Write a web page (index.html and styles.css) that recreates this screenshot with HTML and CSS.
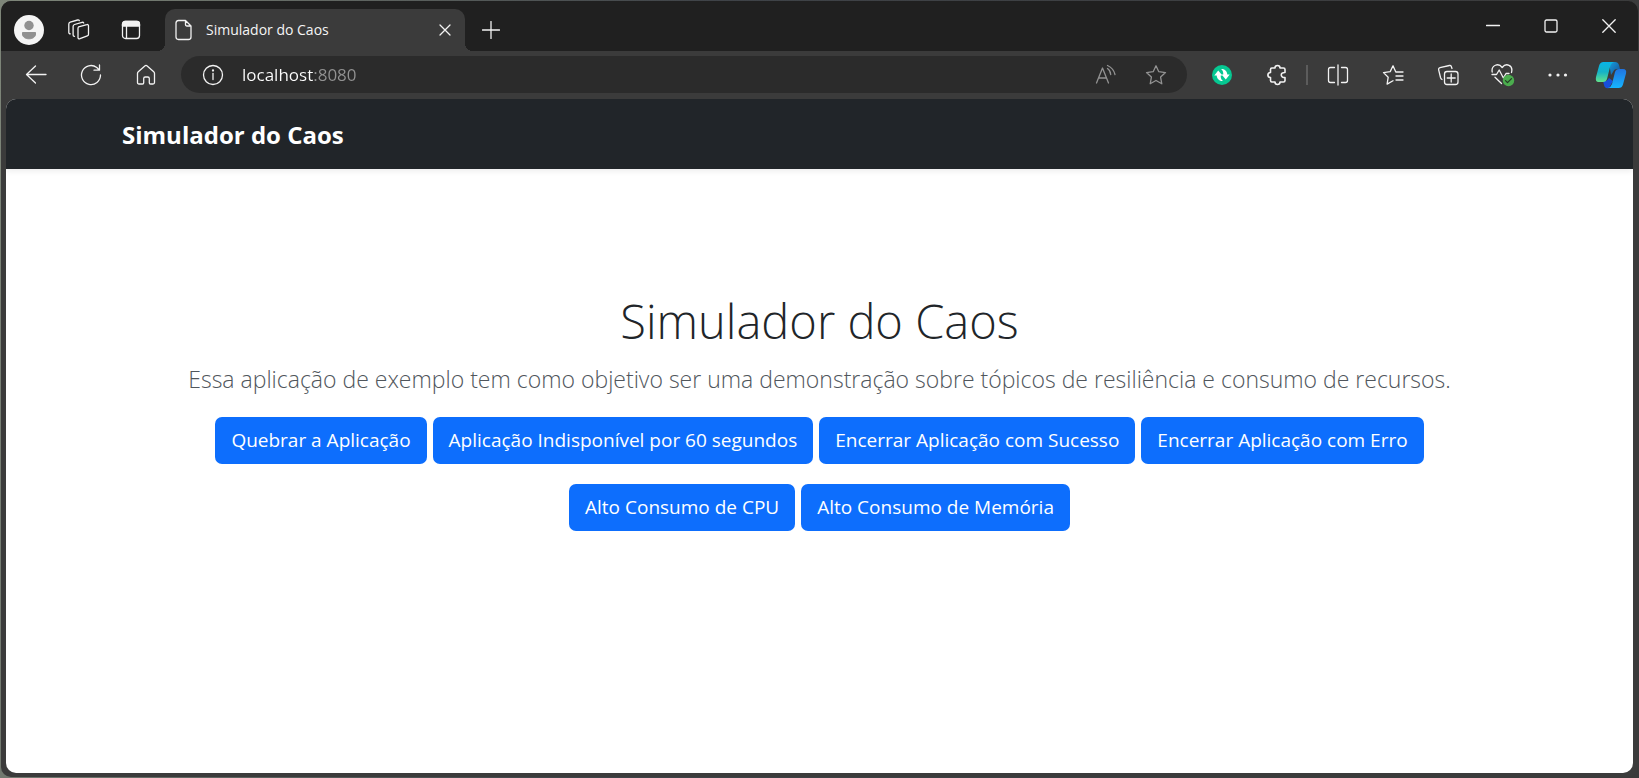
FILE: index.html
```html
<!DOCTYPE html>
<html lang="pt-BR">
<head>
  <meta charset="UTF-8">
  <title>Simulador do Caos</title>
  <link rel="stylesheet" href="styles.css">
</head>
<body>
  <div class="window">
    <div class="titlebar">
      <button class="profile" aria-label="Perfil">
        <svg width="30" height="30" viewBox="0 0 30 30"><circle cx="15" cy="15" r="15" fill="#f5f5f5"/><circle cx="15" cy="10.500" r="4.700" fill="#919191"/><path d="M8.500 17.500h13v1.500c0 3-2.800 4.800-6.500 4.800s-6.500-1.800-6.500-4.800z" fill="#919191" stroke="#919191" stroke-linejoin="round"/></svg>
      </button>
      <button class="title-button" aria-label="Workspaces">
        <svg class="icon" width="24" height="24" viewBox="0 0 24 24"><path d="M11.600 8.800l8.200-2.200c1-.3 1.700.3 1.700 1.200v8.400c0 .8-.4 1.400-1.200 1.700l-7.300 2.800c-1.200.4-2-.1-2-1.200v-8.800c0-1 .1-1.600.6-1.900zM7.500 18.300c-.9 0-1.400-.5-1.400-1.400V8.500c0-1 .5-1.700 1.400-2l7.500-2.200c.8-.2 1.400 0 1.700.7M3.300 15.800c-.9 0-1.500-.5-1.500-1.400V6.100c0-1 .5-1.700 1.400-2l7.400-2.100c.8-.2 1.400 0 1.700.6"/></svg>
      </button>
      <button class="title-button" aria-label="Ações da guia">
        <svg class="icon" width="22" height="22" viewBox="0 0 22 22"><rect x="2.500" y="2.500" width="17" height="17" rx="3"/><path d="M2.500 7V5q0-2.500 2.500-2.500h12q2.500 0 2.500 2.500v2z" fill="#f2f2f2"/><path d="M6.500 7v12"/></svg>
      </button>
      <div class="tab">
        <svg class="icon" width="20" height="22" viewBox="0 0 20 22"><path d="M4.500 1.500h7l5.500 5.500v11q0 2.500-2.500 2.500h-10q-2.500 0-2.500-2.500V4q0-2.500 2.500-2.500zM11.500 1.500v4q0 1.500 1.500 1.500h4"/></svg>
        <span class="tab-title">Simulador do Caos</span>
        <button class="tab-close" aria-label="Fechar guia">
          <svg class="icon" width="12" height="12" viewBox="0 0 12 12"><path d="M1 1l10 10M11 1L1 11"/></svg>
        </button>
      </div>
      <button class="title-button" aria-label="Nova guia">
        <svg class="icon" width="18" height="18" viewBox="0 0 18 18"><path d="M9 .5v17M.5 9h17"/></svg>
      </button>
      <div class="window-controls">
        <button aria-label="Minimizar"><svg class="icon" width="14" height="14" viewBox="0 0 14 14"><path d="M.5 6.500h13"/></svg></button>
        <button aria-label="Maximizar"><svg class="icon" width="14" height="14" viewBox="0 0 14 14"><rect x="1" y="1" width="12" height="12" rx="1.500"/></svg></button>
        <button aria-label="Fechar"><svg class="icon" width="14" height="14" viewBox="0 0 14 14"><path d="M.8.8l12.400 12.400M13.200.8L.8 13.200"/></svg></button>
      </div>
    </div>

    <div class="toolbar">
      <button class="tool" aria-label="Voltar"><svg class="icon" width="22" height="22" viewBox="0 0 22 22"><path d="M21 10.500H1.500M10.500 2l-9 8.500 9 8.500"/></svg></button>
      <button class="tool" aria-label="Atualizar"><svg class="icon" width="22" height="22" viewBox="0 0 22 22"><path d="M20.500 11a9.500 9.500 0 1 1-3.700-7.500l2.200 2.200M19.500 1v5.200h-5.500"/></svg></button>
      <button class="tool" aria-label="Página inicial"><svg class="icon" width="22" height="22" viewBox="0 0 22 22"><path d="M2.500 9.500q0-1 .8-1.700l6.500-5.900q1.200-1 2.400 0l6.500 5.900q.8.700.8 1.700v9q0 1.500-1.500 1.500h-2.500q-1.200 0-1.200-1.200v-4.300q0-1.500-1.500-1.500h-2.600q-1.500 0-1.500 1.500v4.300q0 1.200-1.200 1.200H4q-1.500 0-1.500-1.500z"/></svg></button>
      <div class="address">
        <svg class="icon" width="22" height="22" viewBox="0 0 22 22"><circle cx="11" cy="11" r="9.500"/><path d="M11 9.500v6"/><circle cx="11" cy="6.500" r=".5" fill="#f2f2f2"/></svg>
        <input class="url" type="text" aria-label="Endereço" value="localhost:8080">
        <button aria-label="Ler em voz alta"><svg class="icon dim" width="22" height="22" viewBox="0 0 22 22"><path d="M1.500 19L7.500 4l6 15M3.500 14h8M12.500 4.500q3 2 3.200 6M12.500 1.500q6.200 3 7.500 9"/></svg></button>
        <button aria-label="Adicionar aos favoritos"><svg class="icon dim" width="22" height="22" viewBox="0 0 22 22"><path d="M11 1.800l2.800 5.900 6.700.9-4.900 4.500 1.200 6.700-5.800-3.300-5.800 3.300 1.200-6.700-4.900-4.500 6.700-.9z"/></svg></button>
      </div>
      <div class="extensions">
        <button class="tool" aria-label="Sincronizar">
          <svg width="22" height="22" viewBox="0 0 22 22"><circle cx="11" cy="11" r="10" fill="#06c892"/><path d="M7.200 6.500L3.300 11.500h2.400c.2 3.500 2.600 5.500 6.300 5.500-1.700-1.300-2.400-3-2.300-5.500h1.700zM14.800 15.500l3.900-5h-2.400C16.100 7 13.700 5 10 5c1.700 1.300 2.400 3 2.300 5.500h-1.700z" fill="#fff"/></svg>
        </button>
        <button class="tool" aria-label="Extensões"><svg class="icon bold" width="22" height="22" viewBox="0 0 22 22"><path d="M4.500 5.500q0-1.500 1.500-1.500h3c0-3.300 5-3.300 5 0h3.500q1.500 0 1.500 1.500v3c-5-.2-5 5.200 0 5v3q0 1.500-1.500 1.500H14c0 3.300-5 3.300-5 0H6q-1.500 0-1.500-1.500v-3c-3.500-.2-3.500-4.800 0-5z"/></svg></button>
        <span class="separator"></span>
      </div>
      <button class="tool" aria-label="Dividir tela"><svg class="icon" width="22" height="22" viewBox="0 0 22 22"><path d="M7.500 3.500h-4q-2 0-2 2v11q0 2 2 2h4M14.500 3.500h4q2 0 2 2v11q0 2-2 2h-4M11 1v20"/></svg></button>
      <button class="tool" aria-label="Favoritos"><svg class="icon" width="22" height="22" viewBox="0 0 22 22"><path d="M19 8h-5.200L11 1.800 8.200 7.600l-6.700 1 4.700 4.600-1.100 6.900 5.900-3.400M14 12h7M14 16h7M14.500 8h6.500"/></svg></button>
      <button class="tool" aria-label="Coleções"><svg class="icon" width="22" height="22" viewBox="0 0 22 22"><rect x="7.500" y="7.500" width="13.500" height="13" rx="2.500"/><path d="M14.200 10v8M10.200 14h8M15 4.500l-.7-2q-.5-1.300-1.900-1L3 3.600q-1.700.5-1.400 2l1.900 7.900q.4 1.500 1.500 2"/></svg></button>
      <button class="tool" aria-label="Desempenho"><svg class="icon" width="26" height="24" viewBox="0 0 26 24"><path d="M2.200 9C1 2 8.500-.5 12.200 4.500 16-.5 23.500 2 21.500 9.500M2 11.500h4.500L9.200 7l4.200 8 2.600-4.500h3M5 14.200l6.500 6.300"/><circle cx="18.500" cy="17.500" r="5.700" fill="#4bad4e" stroke="none"/><path d="M15.500 17.600l2 2 4-4" stroke="#243c25"/></svg></button>
      <button class="tool" aria-label="Configurações e mais"><svg width="22" height="22" viewBox="0 0 22 22" fill="#f2f2f2"><circle cx="3" cy="11" r="1.600"/><circle cx="11" cy="11" r="1.600"/><circle cx="18.500" cy="11" r="1.600"/></svg></button>
      <button class="tool copilot" aria-label="Copilot">
        <svg width="32" height="28" viewBox="0 0 32 28">
          <defs>
            <linearGradient id="cyanGreen" x1="0" y1="0" x2="0" y2="1"><stop offset="0" stop-color="#08b5e8"/><stop offset=".5" stop-color="#16b3c6"/><stop offset="1" stop-color="#62e38b"/></linearGradient>
            <linearGradient id="blueCyan" x1="0" y1="0" x2="0" y2="1"><stop offset="0" stop-color="#2173df"/><stop offset="1" stop-color="#15b5ff"/></linearGradient>
            <linearGradient id="deepBlue" x1="0" y1="0" x2="1" y2="1"><stop offset="0" stop-color="#169ee0"/><stop offset="1" stop-color="#174f93"/></linearGradient>
          </defs>
          <path d="M14 1h6q3 0 4 3l1 4h-3q-3 0-4 3l-2 3z" fill="url(#deepBlue)"/>
          <path d="M8 20h3q2-1 3-3l4 3-4 7q-4 1-5-3z" fill="#174fdb"/>
          <path d="M8.500 1H19q-3 1-4 5l-3 12q-1 3-4 3H3.500Q0 21 1 16L4 5q1-4 4.500-4z" fill="url(#cyanGreen)"/>
          <path d="M23 8h5q4 0 3 4.500l-3 11q-1 3.500-4.500 3.500H13q3-1 4-4l3-12q1-3 4-3z" fill="url(#blueCyan)"/>
        </svg>
      </button>
    </div>

    <div class="page">
      <header class="navbar">
        <div class="container">
          <a class="navbar-brand" href="#">Simulador do Caos</a>
        </div>
      </header>
      <main class="hero">
        <h1>Simulador do Caos</h1>
        <p class="lead">Essa aplicação de exemplo tem como objetivo ser uma demonstração sobre tópicos de resiliência e consumo de recursos.</p>
        <div class="actions">
          <button class="btn">Quebrar a Aplicação</button>
          <button class="btn">Aplicação Indisponível por 60 segundos</button>
          <button class="btn">Encerrar Aplicação com Sucesso</button>
          <button class="btn">Encerrar Aplicação com Erro</button>
        </div>
        <div class="actions">
          <button class="btn">Alto Consumo de CPU</button>
          <button class="btn">Alto Consumo de Memória</button>
        </div>
      </main>
    </div>
  </div>
</body>
</html>
```

FILE: styles.css
```css
* {
  box-sizing: border-box;
}
body {
  margin: 0;
  height: 100vh;
  padding: 1px;
  background: linear-gradient(100deg, #7e8679, #3f4348 40%, #3a3a3a);
  font-family: "Segoe UI", "Open Sans", "Noto Sans", sans-serif;
  color: #212529;
}
button {
  border: none;
  padding: 0;
  background: none;
  font-family: inherit;
  cursor: pointer;
}
svg {
  display: block;
  flex: none;
}
.window {
  height: 100%;
  display: flex;
  flex-direction: column;
  border-radius: 10px;
  overflow: hidden;
  background-color: #3b3b3b;
}
.icon {
  fill: none;
  stroke: #f2f2f2;
  stroke-width: 1.3;
  stroke-linecap: round;
  stroke-linejoin: round;
}
.icon.bold {
  stroke-width: 1.6;
}
.icon.dim {
  stroke: #929292;
}

/* title bar */
.titlebar {
  display: flex;
  height: 50px;
  padding: 8px 0 0 12px;
  background-color: #202020;
}
.profile {
  padding: 0 1px;
  margin-right: 8px;
}
.title-button {
  width: 52px;
  display: flex;
  align-items: center;
  justify-content: center;
}
.tab {
  position: relative;
  display: flex;
  align-items: center;
  width: 300px;
  margin-left: 8px;
  padding: 0 14px 0 9px;
  border-radius: 10px 10px 0 0;
  background-color: #3b3b3b;
  color: #f5f5f5;
}
.tab::before,
.tab::after {
  content: "";
  position: absolute;
  bottom: 0;
  width: 8px;
  height: 8px;
}
.tab::before {
  left: -8px;
  background: radial-gradient(circle at 0 0, transparent 8px, #3b3b3b 8px);
}
.tab::after {
  right: -8px;
  background: radial-gradient(circle at 100% 0, transparent 8px, #3b3b3b 8px);
}
.tab-title {
  flex: 1;
  margin-left: 12px;
  padding-bottom: 2px;
  font-size: 14px;
}
.window-controls {
  display: flex;
  margin: -8px 0 0 auto;
}
.window-controls button {
  width: 58px;
  display: flex;
  align-items: center;
  justify-content: center;
}

/* toolbar */
.toolbar {
  display: flex;
  align-items: center;
  height: 48px;
  padding: 0 1px 1px 7px;
}
.tool {
  width: 55px;
  height: 37px;
  display: flex;
  align-items: center;
  justify-content: center;
}
.tool.copilot {
  width: 52px;
}
.address {
  flex: 1;
  display: flex;
  align-items: center;
  height: 37px;
  margin: 0 7px 0 8px;
  padding: 0 20px 0 21px;
  border-radius: 19px;
  background-color: #2b2b2b;
}
.address button {
  margin-left: 28px;
}
.url {
  flex: 1;
  min-width: 0;
  margin-left: 18px;
  padding: 0;
  border: none;
  outline: none;
  font-family: inherit;
  font-size: 17px;
  /* host in white, port in grey */
  background: linear-gradient(90deg, #fff 72px, #929292 72px);
  background-clip: text;
  -webkit-background-clip: text;
  color: transparent;
  caret-color: #fff;
}
.extensions {
  display: flex;
  align-items: center;
}
.separator {
  width: 2px;
  height: 20px;
  margin: 0 2px;
  background-color: #5c5c5c;
}

/* page */
.page {
  flex: 1;
  margin: 0 5px 4px;
  border-radius: 10px;
  overflow: hidden;
  background-color: #fff;
}
.navbar {
  height: 70px;
  display: flex;
  align-items: center;
  background-color: #212529;
  box-shadow: 0 2px 6px rgba(0, 0, 0, 0.08);
}
.container {
  width: 100%;
  max-width: 1395px;
  margin: 0 auto;
}
.navbar-brand {
  font-size: 24px;
  font-weight: 700;
  color: #fff;
  text-decoration: none;
}
.hero {
  padding: 122px 20px;
  text-align: center;
}
h1 {
  margin: 0 0 9px;
  font-size: 47px;
  font-weight: 300;
  line-height: 60px;
}
.lead {
  margin: 0 0 19px;
  font-size: 23px;
  font-weight: 300;
  line-height: 38px;
  color: #50565c;
}
.actions {
  display: flex;
  flex-wrap: wrap;
  justify-content: center;
  gap: 6px;
  margin-bottom: 20px;
}
.btn {
  padding: 0 16px;
  border-radius: 7px;
  background-color: #0d6efd;
  color: #fff;
  font-size: 19px;
  line-height: 47px;
}
.btn:hover {
  background-color: #0b5ed7;
}
```
